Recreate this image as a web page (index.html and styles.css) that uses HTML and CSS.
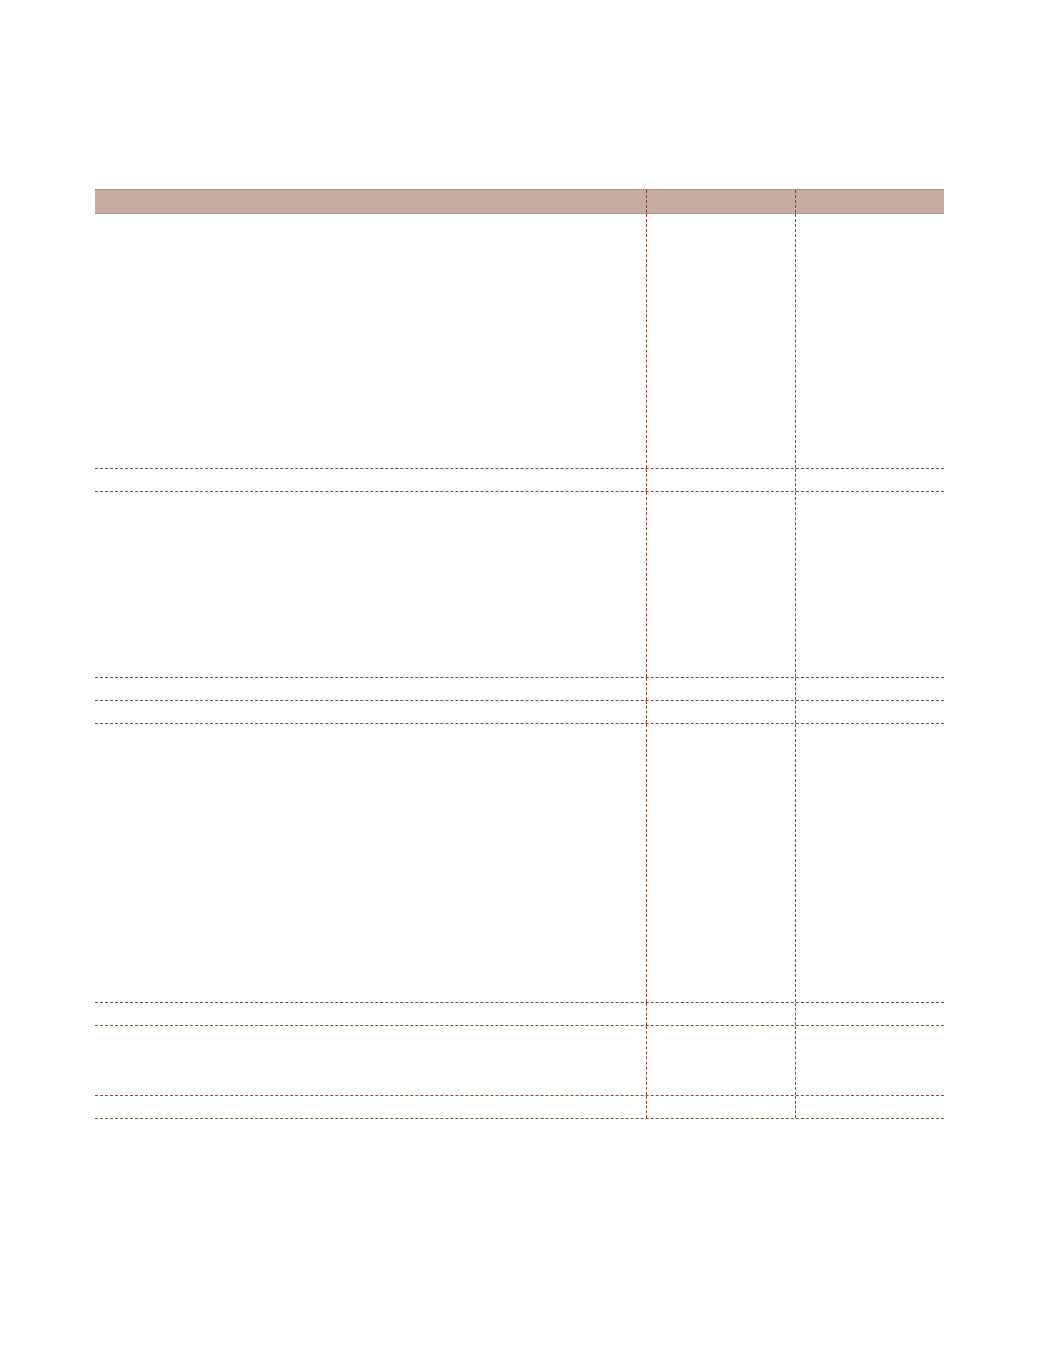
FILE: index.html
```html
<!DOCTYPE html>
<html lang="en">
<head>
<meta charset="utf-8">
<title>Table</title>
<link rel="stylesheet" href="styles.css">
</head>
<body>
<div class="page">
  <div class="sheet">
    <div class="row head"><div class="cell"></div><div class="cell"></div><div class="cell"></div></div>
    <div class="row r1"><div class="cell"></div><div class="cell"></div><div class="cell"></div></div>
    <div class="row r2"><div class="cell"></div><div class="cell"></div><div class="cell"></div></div>
    <div class="row r3"><div class="cell"></div><div class="cell"></div><div class="cell"></div></div>
    <div class="row r2"><div class="cell"></div><div class="cell"></div><div class="cell"></div></div>
    <div class="row r2"><div class="cell"></div><div class="cell"></div><div class="cell"></div></div>
    <div class="row r6"><div class="cell"></div><div class="cell"></div><div class="cell"></div></div>
    <div class="row r2"><div class="cell"></div><div class="cell"></div><div class="cell"></div></div>
    <div class="row r8"><div class="cell"></div><div class="cell"></div><div class="cell"></div></div>
    <div class="row r2"><div class="cell"></div><div class="cell"></div><div class="cell"></div></div>
  </div>
</div>
</body>
</html>
```
FILE: styles.css
```css
html, body {
  margin: 0;
  padding: 0;
  background: #ffffff;
  font-family: "Liberation Sans", Arial, sans-serif;
}
.page {
  padding: 189px 0 0 95px;
}
.sheet {
  width: 849px;
}
.row {
  display: grid;
  grid-template-columns: 551px 149px 149px;
  border-bottom: 1px dashed #8e4a3c;
}
.row .cell + .cell {
  border-left: 1px dashed #8e4a3c;
}
.head {
  background: #c5aba0;
  border-top: 1px dotted #8f7a74;
  border-bottom: 1px dotted #8f7a74;
  height: 23px;
}
.head .cell + .cell {
  border-left: 1px dashed #7a4438;
}
.r1 { height: 254px; }
.r2 { height: 22px; }
.r3 { height: 185px; }
.r6 { height: 278px; }
.r8 { height: 69px; }
```
